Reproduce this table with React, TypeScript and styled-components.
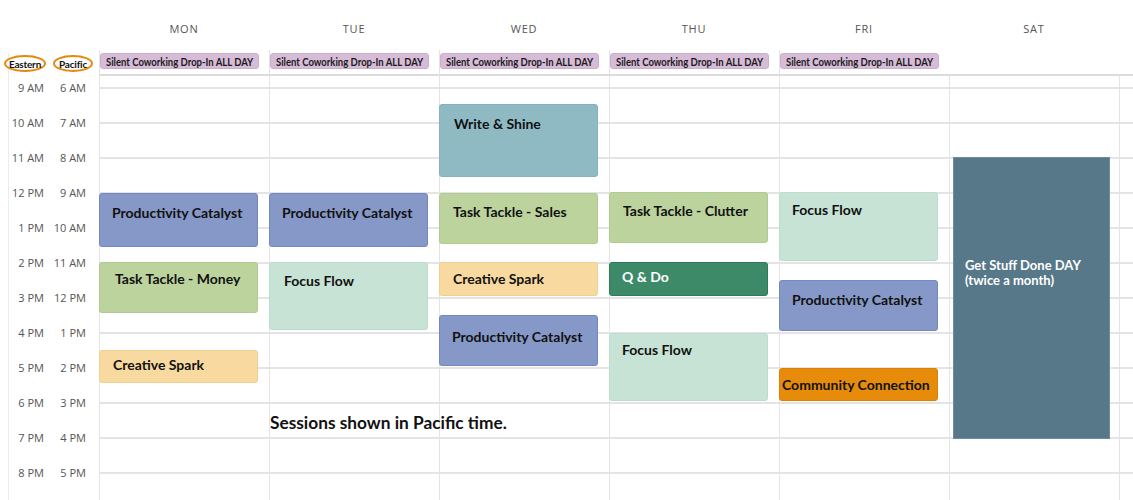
import React from 'react';
import styled, { createGlobalStyle } from 'styled-components';

const GlobalStyle = createGlobalStyle`
  html, body {
    margin: 0;
    padding: 0;
    background: #ffffff;
  }
  body {
    font-family: 'Open Sans', 'Liberation Sans', sans-serif;
    width: 1133px;
    height: 500px;
    overflow: hidden;
  }
`;

const GUTTER = 99;
const DAY_W = 170;
const ROW_H = 35;
const LINE = '#e4e4e4';

const days = ['MON', 'TUE', 'WED', 'THU', 'FRI', 'SAT'];
const eastern = ['9 AM', '10 AM', '11 AM', '12 PM', '1 PM', '2 PM', '3 PM', '4 PM', '5 PM', '6 PM', '7 PM', '8 PM'];
const pacific = ['6 AM', '7 AM', '8 AM', '9 AM', '10 AM', '11 AM', '12 PM', '1 PM', '2 PM', '3 PM', '4 PM', '5 PM'];

type Kind = 'catalyst' | 'tackle' | 'spark' | 'flow' | 'write' | 'qdo' | 'community' | 'getstuff';

interface Session {
  title: string;
  kind: Kind;
  top: number;
  height: number;
  padTop: number;
  padLeft: number;
}

const palette: Record<Kind, { bg: string; border: string; text: string }> = {
  catalyst: { bg: '#8598c7', border: '#7488bf', text: '#111' },
  tackle: { bg: '#bcd39d', border: '#b1ca90', text: '#111' },
  spark: { bg: '#f8daa0', border: '#f1cf91', text: '#111' },
  flow: { bg: '#c6e3d5', border: '#bddcce', text: '#111' },
  write: { bg: '#8fbac4', border: '#86b2bd', text: '#111' },
  qdo: { bg: '#3d8a69', border: '#2f7a5b', text: '#fff' },
  community: { bg: '#e68c0a', border: '#d98207', text: '#111' },
  getstuff: { bg: '#567888', border: '#6c8d9b', text: '#fff' },
};

// tops are measured from the top of the timed grid (the 9 AM Eastern line sits at 13px)
const schedule: Session[][] = [
  [
    { title: 'Productivity Catalyst', kind: 'catalyst', top: 119, height: 54, padTop: 11, padLeft: 12 },
    { title: 'Task Tackle - Money', kind: 'tackle', top: 188, height: 51, padTop: 8, padLeft: 15 },
    { title: 'Creative Spark', kind: 'spark', top: 276, height: 33, padTop: 6, padLeft: 13 },
  ],
  [
    { title: 'Productivity Catalyst', kind: 'catalyst', top: 119, height: 54, padTop: 11, padLeft: 12 },
    { title: 'Focus Flow', kind: 'flow', top: 188, height: 68, padTop: 10, padLeft: 14 },
  ],
  [
    { title: 'Write & Shine', kind: 'write', top: 30, height: 73, padTop: 11, padLeft: 14 },
    { title: 'Task Tackle - Sales', kind: 'tackle', top: 119, height: 51, padTop: 10, padLeft: 13 },
    { title: 'Creative Spark', kind: 'spark', top: 188, height: 34, padTop: 8, padLeft: 13 },
    { title: 'Productivity Catalyst', kind: 'catalyst', top: 241, height: 51, padTop: 13, padLeft: 12 },
  ],
  [
    { title: 'Task Tackle - Clutter', kind: 'tackle', top: 118, height: 51, padTop: 10, padLeft: 13 },
    { title: 'Q & Do', kind: 'qdo', top: 188, height: 34, padTop: 6, padLeft: 12 },
    { title: 'Focus Flow', kind: 'flow', top: 259, height: 68, padTop: 8, padLeft: 12 },
  ],
  [
    { title: 'Focus Flow', kind: 'flow', top: 118, height: 69, padTop: 9, padLeft: 12 },
    { title: 'Productivity Catalyst', kind: 'catalyst', top: 206, height: 51, padTop: 11, padLeft: 12 },
    { title: 'Community Connection', kind: 'community', top: 294, height: 33, padTop: 8, padLeft: 2 },
  ],
  [
    { title: 'Get Stuff Done DAY (twice a month)', kind: 'getstuff', top: 83, height: 282, padTop: 100, padLeft: 11 },
  ],
];

const Page = styled.div`
  width: 1133px;
  height: 500px;
  display: flex;
  flex-direction: column;
  color: #111;
`;

const Columns = styled.div<{ $height: number }>`
  display: grid;
  grid-template-columns: ${GUTTER}px repeat(6, ${DAY_W}px) 1fr;
  height: ${({ $height }) => $height}px;
`;

const DayName = styled.div`
  display: flex;
  align-items: flex-end;
  justify-content: center;
  padding-bottom: 14px;
  font-size: 11px;
  letter-spacing: 0.8px;
  color: #555;
`;

const ZoneCell = styled.div`
  display: flex;
  align-items: flex-start;
  gap: 7px;
  padding: 5px 0 0 4px;
  background: linear-gradient(#ececec, #ececec) 8px 3px / 1px 100% no-repeat;
`;

const ZoneOval = styled.span<{ $w: number }>`
  box-sizing: border-box;
  width: ${({ $w }) => $w}px;
  height: 17px;
  border: 2px solid #e8890f;
  border-radius: 50%;
  background: #fff;
  display: flex;
  align-items: center;
  justify-content: center;
  font-family: 'Lato', 'Liberation Sans', sans-serif;
  font-weight: 700;
  font-size: 10px;
  letter-spacing: -0.2px;
  color: #111;
`;

const AllDayCell = styled.div<{ $open?: boolean }>`
  border-left: ${({ $open }) => ($open ? 'none' : `1px solid ${LINE}`)};
  padding: 3px 0 0 0;
`;

const Chip = styled.div`
  box-sizing: border-box;
  width: 159px;
  height: 16px;
  background: #d6bcd7;
  border: 1px solid #cbb0cd;
  border-radius: 3px;
  display: flex;
  align-items: center;
  padding-left: 5px;
  white-space: nowrap;
  overflow: hidden;
`;

const ChipLabel = styled.span`
  display: inline-block;
  font-family: 'Lato', 'Liberation Sans', sans-serif;
  font-weight: 700;
  font-size: 11px;
  color: #1a1a1a;
  transform: scaleX(0.865);
  transform-origin: left center;
`;

const Grid = styled(Columns)``;

const Gutter = styled.div`
  background: linear-gradient(#ececec, #ececec) 8px 0 / 1px 100% no-repeat;
`;

const TimeList = styled.div`
  margin-top: -4px;
`;

const TimeRow = styled.div`
  height: ${ROW_H}px;
  display: grid;
  grid-template-columns: 44px 42px;
  align-items: center;
  font-size: 11px;
  color: #555;
  text-align: right;
`;

const DayColumn = styled.div`
  position: relative;
  border-left: 1px solid ${LINE};
  border-top: 2px solid #dcdcdc;
  background-image: linear-gradient(to bottom, ${LINE} 0, ${LINE} 2px, transparent 2px);
  background-size: 100% ${ROW_H}px;
  background-position: 0 11px;
`;

const Event = styled.div<{ $kind: Kind }>`
  position: absolute;
  left: -1px;
  width: 159px;
  box-sizing: border-box;
  background: ${({ $kind }) => palette[$kind].bg};
  border: 1px solid ${({ $kind }) => palette[$kind].border};
  border-radius: 3px;
  color: ${({ $kind }) => palette[$kind].text};
  font-family: 'Lato', 'Liberation Sans', sans-serif;
  font-weight: 700;
  font-size: 14px;
  line-height: 15px;
  white-space: nowrap;

  &[data-kind='getstuff'] {
    left: 3px;
    width: 157px;
    border-radius: 0;
    font-size: 13px;
    white-space: normal;
    padding-right: 20px;
  }
`;

const Note = styled.div`
  position: absolute;
  left: 0;
  top: 336px;
  font-family: 'Lato', 'Liberation Sans', sans-serif;
  font-weight: 700;
  font-size: 17.3px;
  color: #111;
  white-space: nowrap;
  z-index: 2;
`;

export default function App() {
  return (
    <Page>
      <GlobalStyle />
      <Columns $height={50}>
        <div />
        {days.map((d) => (
          <DayName key={d}>{d}</DayName>
        ))}
        <div />
      </Columns>
      <Columns $height={24}>
        <ZoneCell>
          <ZoneOval $w={42}>Eastern</ZoneOval>
          <ZoneOval $w={40}>Pacific</ZoneOval>
        </ZoneCell>
        {days.map((d, i) => (
          <AllDayCell key={d} $open={i === 5}>
            {i < 5 && (
              <Chip>
                <ChipLabel>Silent Coworking Drop-In ALL DAY</ChipLabel>
              </Chip>
            )}
          </AllDayCell>
        ))}
        <AllDayCell $open />
      </Columns>
      <Grid $height={426}>
        <Gutter>
          <TimeList>
            {eastern.map((e, i) => (
              <TimeRow key={e}>
                <span>{e}</span>
                <span>{pacific[i]}</span>
              </TimeRow>
            ))}
          </TimeList>
        </Gutter>
        {schedule.map((sessions, i) => (
          <DayColumn key={days[i]}>
            {sessions.map((s) => (
              <Event
                key={s.title + s.top}
                $kind={s.kind}
                data-kind={s.kind}
                style={{ top: s.top - 2, height: s.height, paddingTop: s.padTop, paddingLeft: s.padLeft }}
              >
                {s.title}
              </Event>
            ))}
            {i === 1 && <Note>Sessions shown in Pacific time.</Note>}
          </DayColumn>
        ))}
        <DayColumn />
      </Grid>
    </Page>
  );
}
